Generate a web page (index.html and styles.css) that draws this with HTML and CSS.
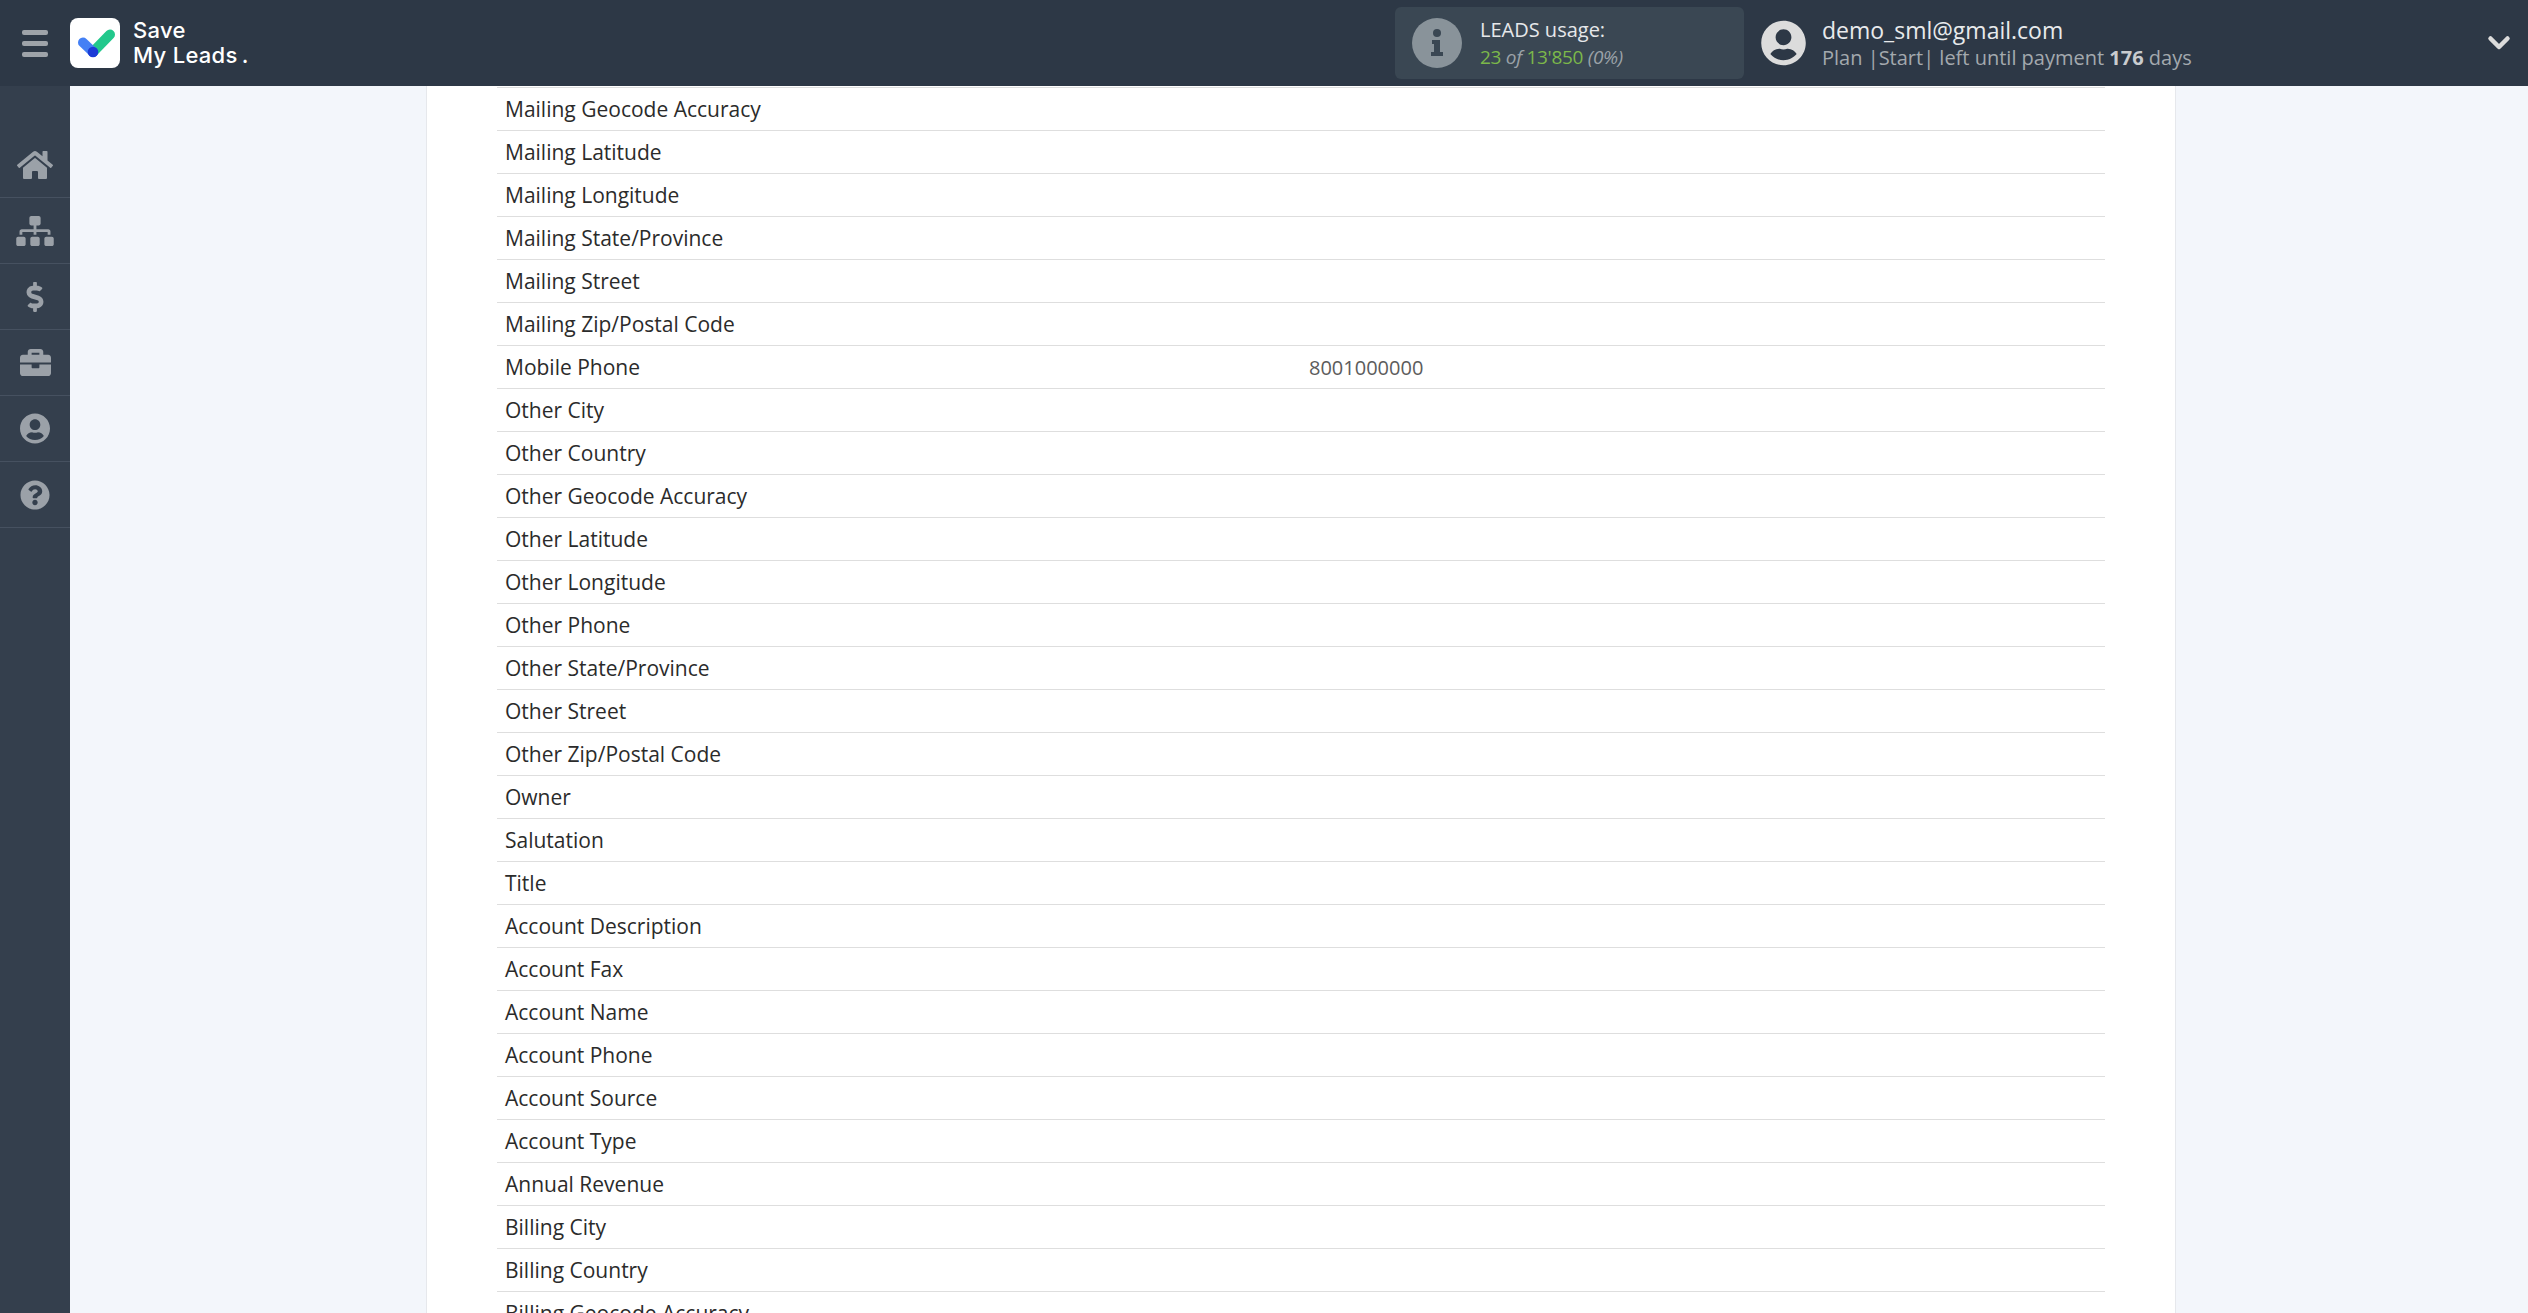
FILE: index.html
```html
<!DOCTYPE html>
<html lang="en">
<head>
<meta charset="utf-8">
<title>Save My Leads</title>
<link rel="stylesheet" href="styles.css">
</head>
<body>
<header class="topbar">
  <button class="burger" aria-label="Menu"><span></span><span></span><span></span></button>
  <div class="logo">
    <svg class="logo-mark" viewBox="0 0 50 50">
      <rect width="50" height="50" rx="8" fill="#fff"/>
      <path d="M23 34L40 16.500" stroke="#22c88c" stroke-width="10" stroke-linecap="round" fill="none"/>
      <path d="M13 24.500L23 34" stroke="#4480f5" stroke-width="10" stroke-linecap="round" fill="none"/>
      <circle cx="23" cy="34" r="5.300" fill="#1c3bd6"/>
    </svg>
    <div class="logo-text">Save<br>My Leads<span class="logo-dot">.</span></div>
  </div>
  <div class="usage">
    <svg class="usage-icon" viewBox="0 0 50 50">
      <circle cx="25" cy="25" r="25" fill="#89939a"/>
      <circle cx="25" cy="15" r="4" fill="#3a4753"/>
      <path d="M20 22h8v12h3v4H19v-4h3v-8h-2z" fill="#3a4753"/>
    </svg>
    <div class="usage-text">
      <div class="usage-title">LEADS usage:</div>
      <div class="usage-line"><span class="green">23</span> <i>of</i> <span class="green">13'850</span> <i>(0%)</i></div>
    </div>
  </div>
  <div class="account">
    <svg class="avatar" viewBox="0 0 496 512"><path d="M248 8C111 8 0 119 0 256s111 248 248 248 248-111 248-248S385 8 248 8zm0 96c48.600 0 88 39.400 88 88s-39.400 88-88 88-88-39.400-88-88 39.400-88 88-88zm0 344c-58.700 0-111.300-26.600-146.500-68.200 18.800-35.400 55.600-59.800 98.500-59.800 2.400 0 4.800.4 7.100 1.100 13 4.200 26.600 6.900 40.900 6.900 14.300 0 28-2.700 40.900-6.900 2.300-.7 4.700-1.100 7.100-1.100 42.900 0 79.700 24.400 98.500 59.800C359.300 421.400 306.700 448 248 448z"/></svg>
    <div>
      <div class="email">demo_sml@gmail.com</div>
      <div class="plan">Plan |Start| left until payment <b>176</b> days</div>
    </div>
  </div>
  <svg class="chevron" viewBox="0 0 24 16"><path d="M3.500 3.500L12 12l8.500-8.500" fill="none" stroke="#dcdcdc" stroke-width="4.500" stroke-linecap="round" stroke-linejoin="round"/></svg>
</header>
<div class="layout">
  <nav class="sidebar">
    <a class="nav-item"><svg class="ico-home" viewBox="0 0 576 512"><path d="M280.370 148.260L96 300.110V464a16 16 0 0 0 16 16l112.060-.29a16 16 0 0 0 15.920-16V368a16 16 0 0 1 16-16h64a16 16 0 0 1 16 16v95.640a16 16 0 0 0 16 16.050L464 480a16 16 0 0 0 16-16V300L295.670 148.260a12.190 12.190 0 0 0-15.300 0zM571.600 251.470L488 182.560V44.050a12 12 0 0 0-12-12h-56a12 12 0 0 0-12 12v72.610L318.470 43a48 48 0 0 0-61 0L4.340 251.470a12 12 0 0 0-1.600 16.900l25.500 31A12 12 0 0 0 45.150 301l235.220-193.740a12.190 12.190 0 0 1 15.300 0L530.900 301a12 12 0 0 0 16.900-1.600l25.500-31a12 12 0 0 0-1.700-16.930z"/></svg></a>
    <a class="nav-item"><svg class="ico-site" viewBox="0 0 640 512"><path d="M128 352H32c-17.670 0-32 14.330-32 32v96c0 17.670 14.330 32 32 32h96c17.670 0 32-14.330 32-32v-96c0-17.670-14.330-32-32-32zm-24-80h192v48h48v-48h192v48h48v-57.590c0-21.170-17.230-38.410-38.410-38.410H344v-64h40c17.670 0 32-14.330 32-32V32c0-17.670-14.330-32-32-32H256c-17.670 0-32 14.330-32 32v96c0 17.670 14.330 32 32 32h40v64H94.410C73.230 224 56 241.230 56 262.410V320h48v-48zm264 80h-96c-17.670 0-32 14.330-32 32v96c0 17.670 14.330 32 32 32h96c17.670 0 32-14.330 32-32v-96c0-17.670-14.330-32-32-32zm240 0h-96c-17.670 0-32 14.330-32 32v96c0 17.670 14.330 32 32 32h96c17.670 0 32-14.330 32-32v-96c0-17.670-14.330-32-32-32z"/></svg></a>
    <a class="nav-item"><svg class="ico-dollar" viewBox="0 0 288 512"><path d="M209.200 233.400l-108-31.600C88.700 198.200 80 186.500 80 173.500c0-16.300 13.200-29.500 29.500-29.500h66.300c12.200 0 24.200 3.700 34.200 10.500 6.100 4.100 14.300 3.100 19.500-2l34.800-34c7.100-6.900 6.100-18.400-1.800-24.500C238 74.800 207.400 64.100 176 64V16c0-8.800-7.200-16-16-16h-32c-8.800 0-16 7.200-16 16v48h-2.500C45.800 64-5.400 118.700.5 183.600c4.200 46.100 39.400 83.600 83.800 96.600l102.500 30c12.500 3.700 21.200 15.300 21.200 28.300 0 16.300-13.200 29.500-29.500 29.500h-66.300C100 368 88 364.300 78 357.500c-6.100-4.100-14.300-3.100-19.500 2l-34.800 34c-7.100 6.900-6.100 18.400 1.800 24.500 24.500 19.200 55.100 29.900 86.500 30v48c0 8.800 7.200 16 16 16h32c8.800 0 16-7.200 16-16v-48.200c46.600-.9 90.300-28.600 105.700-72.700 21.500-61.600-14.600-124.800-72.500-141.700z"/></svg></a>
    <a class="nav-item"><svg class="ico-case" viewBox="0 0 512 512"><path d="M320 336c0 8.840-7.160 16-16 16h-96c-8.840 0-16-7.160-16-16v-48H0v144c0 25.600 22.400 48 48 48h416c25.600 0 48-22.400 48-48V288H320v48zm144-208h-80V80c0-25.600-22.400-48-48-48H176c-25.600 0-48 22.400-48 48v48H48c-25.600 0-48 22.400-48 48v80h512v-80c0-25.600-22.400-48-48-48zm-144 0H192V96h128v32z"/></svg></a>
    <a class="nav-item"><svg class="ico-user" viewBox="0 0 496 512"><path d="M248 8C111 8 0 119 0 256s111 248 248 248 248-111 248-248S385 8 248 8zm0 96c48.600 0 88 39.400 88 88s-39.400 88-88 88-88-39.400-88-88 39.400-88 88-88zm0 344c-58.700 0-111.300-26.600-146.500-68.200 18.800-35.400 55.600-59.800 98.500-59.800 2.400 0 4.800.4 7.100 1.100 13 4.200 26.600 6.900 40.900 6.900 14.300 0 28-2.700 40.900-6.900 2.300-.7 4.700-1.100 7.100-1.100 42.900 0 79.700 24.400 98.500 59.800C359.300 421.400 306.700 448 248 448z"/></svg></a>
    <a class="nav-item"><svg class="ico-help" viewBox="0 0 512 512"><path d="M504 256c0 136.997-111.043 248-248 248S8 392.997 8 256C8 119.083 119.043 8 256 8s248 111.083 248 248zM262.655 90c-54.497 0-89.255 22.957-116.549 63.758-3.536 5.286-2.353 12.415 2.715 16.258l34.699 26.310c5.205 3.947 12.621 3.008 16.665-2.122 17.864-22.658 30.113-35.797 57.303-35.797 20.429 0 45.698 13.148 45.698 32.958 0 14.976-12.363 22.667-32.534 33.976C247.128 238.528 216 254.941 216 296v4c0 6.627 5.373 12 12 12h56c6.627 0 12-5.373 12-12v-1.333c0-28.462 83.186-29.647 83.186-106.667 0-58.002-60.165-102-116.531-102zM256 338c-25.365 0-46 20.635-46 46 0 25.364 20.635 46 46 46s46-20.636 46-46c0-25.365-20.635-46-46-46z"/></svg></a>
  </nav>
  <main class="content">
    <section class="card">
      <table class="fields">
        <tbody>
          <tr><td>Mailing Geocode Accuracy</td><td></td></tr>
          <tr><td>Mailing Latitude</td><td></td></tr>
          <tr><td>Mailing Longitude</td><td></td></tr>
          <tr><td>Mailing State/Province</td><td></td></tr>
          <tr><td>Mailing Street</td><td></td></tr>
          <tr><td>Mailing Zip/Postal Code</td><td></td></tr>
          <tr><td>Mobile Phone</td><td class="value">8001000000</td></tr>
          <tr><td>Other City</td><td></td></tr>
          <tr><td>Other Country</td><td></td></tr>
          <tr><td>Other Geocode Accuracy</td><td></td></tr>
          <tr><td>Other Latitude</td><td></td></tr>
          <tr><td>Other Longitude</td><td></td></tr>
          <tr><td>Other Phone</td><td></td></tr>
          <tr><td>Other State/Province</td><td></td></tr>
          <tr><td>Other Street</td><td></td></tr>
          <tr><td>Other Zip/Postal Code</td><td></td></tr>
          <tr><td>Owner</td><td></td></tr>
          <tr><td>Salutation</td><td></td></tr>
          <tr><td>Title</td><td></td></tr>
          <tr><td>Account Description</td><td></td></tr>
          <tr><td>Account Fax</td><td></td></tr>
          <tr><td>Account Name</td><td></td></tr>
          <tr><td>Account Phone</td><td></td></tr>
          <tr><td>Account Source</td><td></td></tr>
          <tr><td>Account Type</td><td></td></tr>
          <tr><td>Annual Revenue</td><td></td></tr>
          <tr><td>Billing City</td><td></td></tr>
          <tr><td>Billing Country</td><td></td></tr>
          <tr><td>Billing Geocode Accuracy</td><td></td></tr>
        </tbody>
      </table>
    </section>
  </main>
</div>
</body>
</html>
```
FILE: styles.css
```css
* { box-sizing: border-box; }
html, body { margin: 0; height: 100%; overflow: hidden; }
body { font-family: "Open Sans", sans-serif; background: #f3f6fb; color: #2b2b2b; display: flex; flex-direction: column; }

.topbar { height: 86px; flex: none; background: #2d3846; display: flex; align-items: center; }
.burger { width: 70px; height: 86px; padding: 0 22px; margin: 0; border: 0; background: none; display: flex; flex-direction: column; justify-content: center; gap: 6px; }
.burger span { display: block; height: 5px; width: 26px; border-radius: 2px; background: #9ea3a9; }
.logo { display: flex; align-items: center; gap: 13px; width: 1325px; }
.logo-mark { width: 50px; height: 50px; display: block; }
.logo-text { font-family: Inter, sans-serif; font-weight: 500; font-size: 22px; line-height: 25px; color: #fff; letter-spacing: .3px; }
.logo-dot { margin-left: 4px; }

.usage { width: 349px; height: 72px; background: #3a4753; border-radius: 6px; display: flex; align-items: center; padding-left: 17px; gap: 18px; }
.usage-icon { width: 50px; height: 50px; flex: none; }
.usage-title { font-size: 20px; line-height: 28px; color: #e6e8ea; }
.usage-line { font-size: 19px; line-height: 26px; color: #9aa2a8; letter-spacing: -.3px; }
.green { color: #7cb84a; }

.account { display: flex; align-items: center; gap: 16px; margin-left: 17px; flex: 1; }
.avatar { width: 45px; height: 46px; fill: #dcdcdc; flex: none; }
.email { font-size: 23px; line-height: 30px; color: #e8eaec; }
.plan { font-size: 20px; line-height: 26px; color: #a3a9ae; }
.plan b { font-weight: 700; color: #c9cccf; }
.chevron { width: 24px; height: 16px; margin-right: 17px; flex: none; }

.layout { flex: 1; display: flex; min-height: 0; }
.sidebar { width: 70px; flex: none; background: #343f4d; padding-top: 46px; }
.nav-item { height: 66px; display: flex; align-items: center; justify-content: center; border-bottom: 1px solid #465160; }
.nav-item svg { fill: #9ba1a8; display: block; }
.ico-home { width: 36px; height: 32px; }
.ico-site { width: 38px; height: 30px; }
.ico-dollar { width: 18px; height: 30px; }
.ico-case { width: 31px; height: 31px; }
.ico-user { width: 30px; height: 31px; }
.ico-help { width: 30px; height: 30px; }

.content { flex: 1; min-width: 0; overflow: hidden; padding-left: 356px; }
.card { width: 1750px; height: 100%; background: #fff; border-left: 1px solid #e6e8ec; border-right: 1px solid #e6e8ec; padding: 1px 70px 0; }
.fields { width: 1608px; table-layout: fixed; border-collapse: separate; border-spacing: 0; border-top: 1px solid #dedede; font-size: 21px; }
.fields td { height: 43px; padding: 0 8px; border-bottom: 1px solid #dedede; vertical-align: middle; white-space: nowrap; }
.fields .value { color: #5c5c5c; font-size: 20px; }
```
